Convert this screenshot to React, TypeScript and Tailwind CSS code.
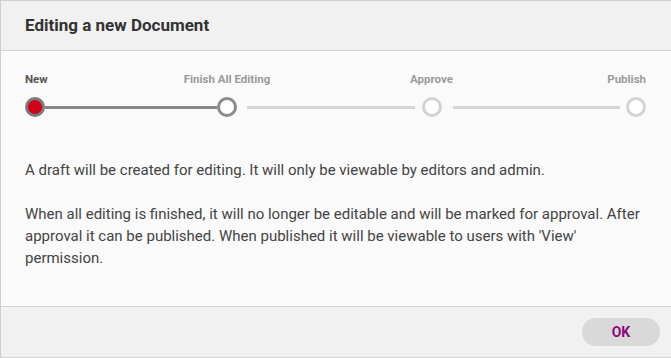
import React from 'react';

type Step = { label: string; state: 'current' | 'next' | 'todo' };

const steps: Step[] = [
  { label: 'New', state: 'current' },
  { label: 'Finish All Editing', state: 'next' },
  { label: 'Approve', state: 'todo' },
  { label: 'Publish', state: 'todo' },
];

const Dot: React.FC<{ state: Step['state'] }> = ({ state }) => {
  if (state === 'current') {
    return <div className="w-5 h-5 rounded-full border-[3px] border-[#7b7b7b] bg-[#d0021b] shrink-0" />;
  }
  if (state === 'next') {
    return <div className="w-5 h-5 rounded-full border-[3px] border-[#8a8a8a] bg-white shrink-0" />;
  }
  return <div className="w-5 h-5 rounded-full border-[3px] border-[#d3d3d3] bg-white shrink-0" />;
};

const StepCol: React.FC<{ step: Step; align: string }> = ({ step, align }) => (
  <div className={`flex flex-col w-5 shrink-0 ${align}`}>
    <span
      className={`whitespace-nowrap text-[11.5px] leading-[13px] font-bold ${
        step.state === 'current' ? 'text-[#555]' : 'text-[#9a9a9a]'
      }`}
    >
      {step.label}
    </span>
    <div className="mt-[11px]">
      <Dot state={step.state} />
    </div>
  </div>
);

const App: React.FC = () => {
  return (
    <div className="w-[671px] h-[358px] bg-[#fafafa] border-l border-t border-[#cfcfcf] font-['Roboto',sans-serif] text-[#444] overflow-hidden">
      <div className="h-[50px] bg-[#f1f1f1] border-b border-[#d2d2d2] flex items-center px-6">
        <h1 className="text-[17px] font-bold text-[#333]">Editing a new Document</h1>
      </div>

      <div className="h-[255px] pl-6 pt-[22px]">
        <div className="flex items-end w-[621px]">
          <StepCol step={steps[0]} align="items-start" />
          <div className="h-[3px] w-[172px] shrink-0 bg-[#878787] mb-[8px]" />
          <StepCol step={steps[1]} align="items-center" />
          <div className="h-[3px] flex-1 ml-[10px] mr-[7px] bg-[#d5d5d5] mb-[8px]" />
          <StepCol step={steps[2]} align="items-center" />
          <div className="h-[3px] flex-1 ml-[11px] mr-[6px] bg-[#d5d5d5] mb-[8px]" />
          <StepCol step={steps[3]} align="items-end" />
        </div>

        <div className="mt-[42px] pr-6 text-[15px] leading-[22px] text-[#444] space-y-[22px]">
          <p>A draft will be created for editing. It will only be viewable by editors and admin.</p>
          <p>
            When all editing is finished, it will no longer be editable and will be marked for approval. After
            approval it can be published. When published it will be viewable to users with 'View' permission.
          </p>
        </div>
      </div>

      <div className="h-[52px] bg-[#f1f1f1] border-y border-[#d2d2d2] flex items-center justify-end pr-[11px]">
        <button className="w-[78px] h-7 rounded-full bg-[#d9d9d9] text-[#8b0a7c] text-sm font-bold">OK</button>
      </div>
    </div>
  );
};

export default App;
